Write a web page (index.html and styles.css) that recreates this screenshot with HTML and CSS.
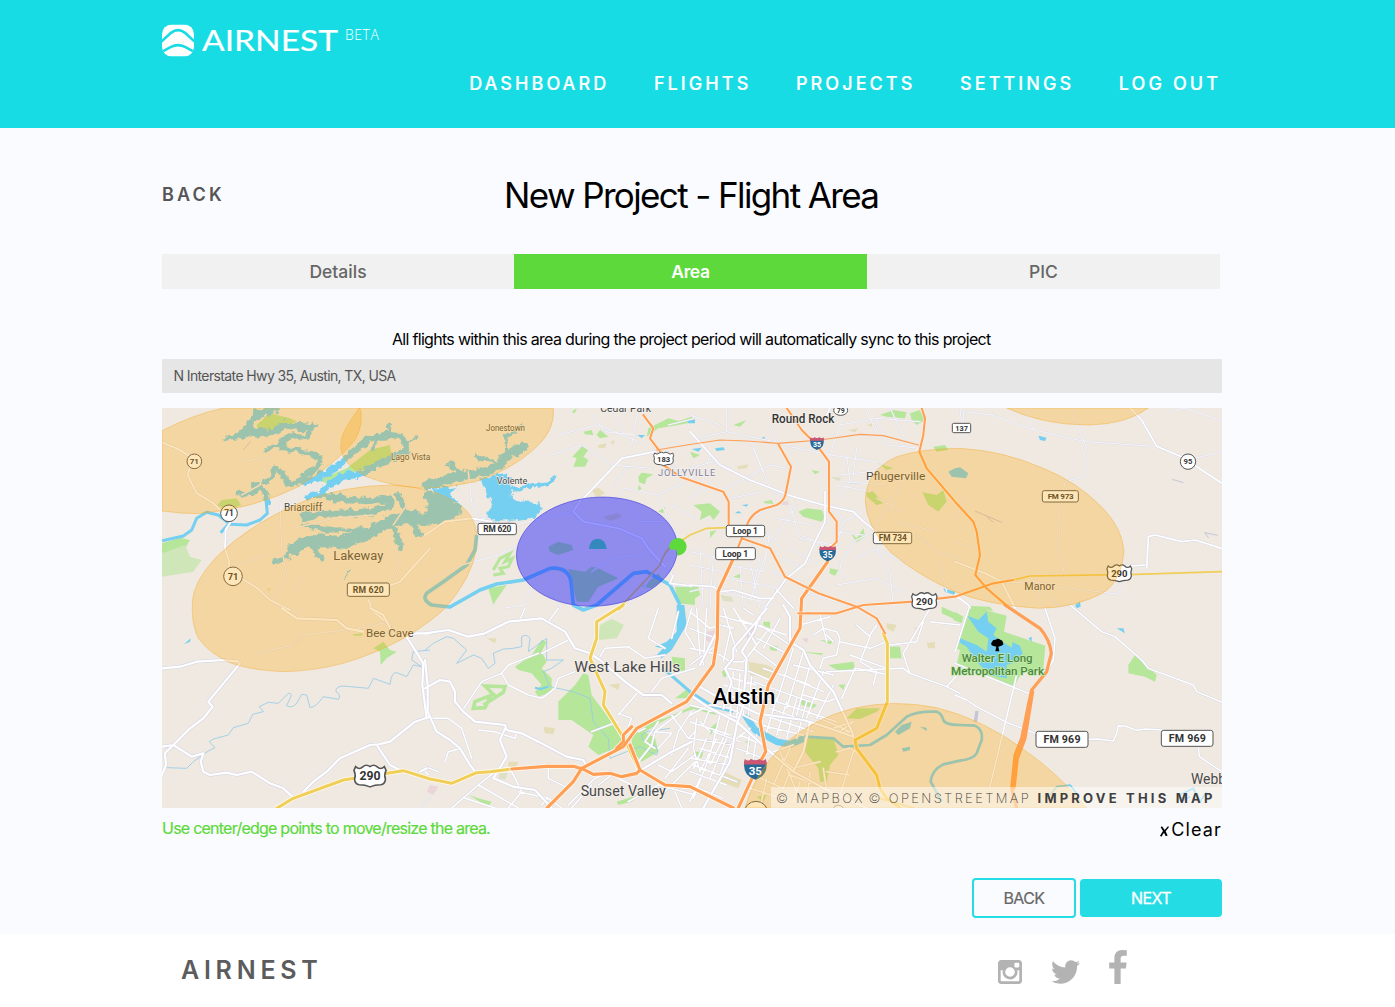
FILE: index.html
```html
<!DOCTYPE html>
<html lang="en">
<head>
<meta charset="utf-8">
<title>Airnest - New Project</title>
<link rel="stylesheet" href="styles.css">
</head>
<body>
<header class="header">
  <div class="wrap header-inner">
    <a class="brand">
      <svg class="brand-mark" viewBox="0 0 96 96"><defs><clipPath id="badge"><rect width="96" height="96" rx="29"/></clipPath></defs><g clip-path="url(#badge)"><rect width="96" height="96" fill="#fff"/><g fill="none" stroke="#18dce4" stroke-width="8"><path d="M-4 53L27 25Q48 9 69 25L100 53"/><path d="M-4 84L27 67Q48 57 69 67L100 84"/></g></g></svg>
      <svg class="brand-name" viewBox="0 0 140 36"><text x="0" y="27" textLength="136" lengthAdjust="spacingAndGlyphs">AIRNEST</text></svg>
      <span class="beta">BETA</span>
    </a>
    <nav class="nav"><a>DASHBOARD</a><a>FLIGHTS</a><a>PROJECTS</a><a>SETTINGS</a><a>LOG OUT</a></nav>
  </div>
</header>

<main class="wrap main">
  <div class="title-row"><a class="back-link">BACK</a><h1>New Project - Flight Area</h1></div>
  <div class="tabs"><span>Details</span><span class="active">Area</span><span>PIC</span></div>
  <p class="note">All flights within this area during the project period will automatically sync to this project</p>
  <div class="search">N Interstate Hwy 35, Austin, TX, USA</div>

  <div class="map">
  <svg class="map-art" viewBox="6 9 3180 1200">
    <defs>
      <filter id="shore" x="-5%" y="-5%" width="110%" height="110%" color-interpolation-filters="sRGB"><feTurbulence type="fractalNoise" baseFrequency=".045" numOctaves="3" seed="4"/><feDisplacementMap in="SourceGraphic" scale="26" xChannelSelector="R" yChannelSelector="G"/></filter>
      <g id="streets">
        <path d="M6 110L95 150M245 270L300 240L320 170M360 290L365 430L380 510L340 600M230 480L320 450M400 370L520 340L640 330M440 270L480 230M430 520L400 570M250 170L330 155M480 150L520 90M690 400L720 470L700 520M700 360L740 300"/>
        <g transform="translate(795 0)"><path d="M400 90L520 60L640 110M380 150L470 120L560 180L680 190M500 30L540 80L630 90M560 9L600 90M640 9L620 120M690 130L770 210L810 220M560 250L610 180M560 300L600 250L700 270L780 230M610 280L640 350L720 350M730 60L810 40M240 370L350 340L440 320L470 350L560 360L640 400L680 450L730 500M0 390L60 350L180 340M0 530L110 480L220 450L320 400M500 500L560 460L660 450M740 500V540L800 545M680 510L650 560L600 609M330 520L300 600L240 609M380 500L370 560L410 609M700 280L760 400M740 300L810 340M130 200L140 290L180 350"/></g>
        <g transform="translate(1590 0)"><path d="M0 30L90 60M20 100L110 80L300 120M110 80V10M180 100L220 200M240 60L260 115M300 125L420 150L560 170M420 150L450 60L560 40L690 50M450 60V9M560 40L590 120L690 130M530 9L560 90M450 210L540 200L590 170M470 150L480 230L440 280M500 130L490 210M600 9L650 110M0 190L70 170L120 190M110 250L240 180L290 190M190 130L240 250L280 280M60 150L30 260L0 280M120 280L220 260M180 340L260 300M200 360L250 410L320 300M300 300L330 400L430 420M240 380L220 500L110 480M260 340L370 360M430 300L460 350L540 310M460 350L440 420M500 460L560 430L640 470M460 520L450 480L490 410L550 380M560 430L600 500L610 609M430 380L520 390M440 240L540 260L590 200M440 540L560 520L640 560M100 560L250 600M110 520L270 550M150 480L160 609M180 470L210 609M210 460L190 550M230 440L180 590M250 500L330 530M280 460L340 490M300 430L370 470M330 390L400 420M340 560L440 590M0 440L90 460M0 480L100 500M0 560L80 540M30 430L40 609M70 450L60 609M610 260L550 380M650 200L600 320M560 280L640 320M620 350L740 380M680 390L740 440L770 560M740 440L810 460M460 230L590 240"/></g>
        <g transform="translate(2385 0)"><path d="M15 9L20 60L0 75M30 100L25 20L110 30L240 75L390 110L600 124M210 9L235 75M355 9L365 60L395 130L385 150L397 175L385 215L330 230L310 350L315 385L305 425L328 475L320 530M720 160L810 138M650 20L690 9L810 50M0 410L70 430M35 280L0 340M240 540L265 609M240 515L260 560L320 609M130 535L240 530L300 545L495 568V500"/></g>
        <g transform="translate(0 600)"><path d="M290 145L400 120L430 90L600 70L690 50M420 9L405 35M790 145L810 140M780 609L810 580"/></g>
      </g>
      <g id="city-streets">
        <g transform="translate(795 600)"><path d="M285 45L300 9M370 50L400 10M110 320L170 230L230 205L250 180L340 145M230 205L250 240L310 270L350 280L390 250L400 220L450 200M430 105L350 145M700 10L670 100L720 130M525 155L540 130L610 125L660 160L720 150M760 20L740 100M680 260L710 220L810 190M580 330L640 260M580 325L620 340L600 390M500 380L580 350M10 340L70 340L110 370L140 460M60 470L70 440L110 430M160 375L210 380L270 400L275 385M0 485L40 500M0 500L10 509M80 609L160 540L210 500L260 500L290 560L250 609M160 540L280 609M120 580L210 609M280 560L370 580L410 609M370 480L370 520L430 550M350 600L370 580M430 600L510 520L560 500M520 540L560 510L620 540M440 609L500 540M610 590L700 540L810 570M640 470L680 420L690 380L770 320M690 380L740 385L700 430M740 330L790 400L810 380M700 480L740 500L810 450M720 520L790 430M740 540L810 470M750 560L770 609M660 370L640 380M700 350L660 410L690 430M800 320L760 380L740 450M700 580L730 550M800 10L780 80L810 130"/></g>
        <g transform="translate(1590 600)"><path d="M0 20L60 70L90 60M0 70L80 100M80 120L0 180M20 10L30 150M50 9L40 180M0 130L90 150M90 60L130 70M100 9L140 140M130 9L200 120M80 30L190 60M160 9L190 30M150 45L290 90M210 60L300 120M90 150L120 170L160 170L200 120M230 80L170 160M270 40L220 130M120 80L100 170M190 130L270 190M200 100L280 140M110 190L180 200L250 230M190 230L360 290M220 190L360 240M310 130L260 290M340 140L290 310M310 180L430 210M280 210L400 260M360 180L320 330M400 200L350 340M430 240L380 340M240 310L380 360M220 330L370 380M210 360L340 390M260 280L230 380M290 290L260 390M320 280L290 400M350 290L320 400M200 270L440 350M340 270L410 290L440 280M370 90L400 70L440 80L450 100L440 150L400 160L390 190M390 30L410 110M330 60L420 35M450 110L540 130L590 110M480 150L590 190M500 60L540 95L510 170L560 200L550 240M410 200L640 190L660 205M430 110L410 90M495 190L455 280M495 190L600 210M540 90L560 60M0 300L150 340M0 350L120 390M0 330L60 300L120 310L240 370M20 340L10 430L30 500M0 400L130 420M60 310L40 360M0 460L120 480M90 330L60 450L10 580M120 330L100 400L60 480M0 500L110 540M30 350L60 380M70 380L150 410M30 430L120 460M10 480L140 530M0 540L100 580M50 400L10 490M80 400L30 500M110 400L60 520M130 400L90 510M30 520L0 590M140 400L180 370M140 430L220 460L190 500M150 390L220 420M180 380L170 450M200 390L190 460M220 450L310 420M240 440L310 490L390 470M190 510L280 550L300 500M180 550L260 575M230 520L210 609M270 440L320 560M300 430L250 540M300 510L460 570M330 530L310 590M360 500L350 590M400 490L410 560M380 360L490 385M390 340L480 380M430 370L490 350L450 380M440 440L480 430L530 460M490 440L450 570M410 500L480 510M720 10L640 145L650 180L660 205L770 245L810 200M600 120L680 110L700 50M770 245L810 265M720 50L810 60M130 200L120 340M150 205L140 340M170 210L160 330M185 215L175 330M100 240L190 265M110 215L200 240M90 265L190 290"/></g>
        <g transform="translate(2385 600)"><path d="M270 10L300 100L295 165L280 190M0 175L220 265M185 210L105 545M0 270L35 285L65 305L150 350L240 385M45 0L0 140M400 403L430 402L475 408L485 385L490 362L510 363L545 376L570 372L620 374M730 425L733 455L801 500"/><path d="M345 0L440 80L480 95L560 165L580 190L715 240L725 260L801 292"/></g>
      </g>
      <g id="avenues">
        <path d="M6 112L60 135L98 160L83 210L110 265L160 295L195 330M212 350L197 375L195 430L208 470L205 490M245 520L290 548L330 585L390 615M810 430L720 530L640 560L620 575M625 585L640 620L690 660L690 690"/>
        <g transform="translate(795 0)"><path d="M475 280L590 160L690 140M470 280L445 320L475 350L580 370L650 400L670 430L720 485M745 510L735 535L800 543M0 390L60 350L140 340L200 350"/></g>
        <g transform="translate(1590 0)"><path d="M0 80L90 180L180 225L310 275L400 300L490 320L520 350L560 380M405 260V350L380 400L345 475L290 520L260 560L220 615M0 540L70 545L95 560L130 555L210 580L250 580M260 555L310 609M420 9L405 40"/></g>
        <g transform="translate(2385 0)"><path d="M525 9L560 45L605 124L690 160L740 195L801 235M575 490L580 395L600 390L680 410L720 405L801 430M495 485L570 480M0 570L40 600L45 609M0 470L90 505L140 530L180 609"/></g>
      </g>
      <g id="city-avenues">
        <g transform="translate(0 600)"><path d="M6 190L60 185L110 170L190 165L235 170M240 175L145 290L158 305L130 340L90 370L40 420L15 445L18 480L6 510M6 425L40 420L95 455L130 445L122 470L130 500L150 510L200 503L230 510L275 500L330 535L370 550L400 578M365 9L410 40L530 45L560 70L610 80M630 9L670 30L690 70M710 85L740 95L790 175L787 240L800 340M740 95L770 85L810 85M430 560L460 530L500 500L540 460L630 420L655 418L690 410L765 350L810 335M650 420L690 480L720 495M780 500L800 490"/></g>
        <g transform="translate(795 600)"><path d="M0 85L70 75L130 95L180 85L250 50L350 40L420 80L450 130L495 145L525 165L600 230L655 270L710 270L740 295M0 165L8 240V320L35 380L75 405L105 430L135 480L150 500M0 250L45 225L75 230L90 260L90 290L115 320L150 350L240 360L245 375L290 385L340 410L425 455L475 465L480 475M240 370L225 405L245 455L205 520L265 545L330 555L380 609M640 500L740 440L800 410M600 400L620 430"/></g>
        <g transform="translate(1590 600)"><path d="M20 240L90 280L150 300L200 325L340 345L390 360L490 395M230 10L205 40L195 75L155 140L170 160L160 300L140 360L120 470L40 609M280 0L300 35L300 110L340 135L360 180L430 260L490 390M210 40L190 60L130 130L130 160L105 190L125 230L100 310M0 270L60 310L140 350L240 440L310 500L420 560L530 609M90 60L30 180M360 350L340 440L310 500"/></g>
      </g>
      <g id="arterials">
        <path d="M350 1210L400 1180L550 1125L730 1097L810 1122L875 1135L950 1103L990 1100L1055 1092"/>
        <path d="M1375 612L1390 600L1310 650L1310 700L1290 760L1335 860L1330 900L1395 1005L1440 1100"/>
        <path d="M2170 685L2182 715V890L2150 970L2085 1005L2090 1030L2150 1110L2160 1150L2180 1180L2220 1209"/>
      </g>
      <g id="thin-arterials">
        <path d="M1375 612L1500 480Q1515 430 1545 420L1590 390L1640 370L1700 368M2560 525L2610 513L2930 508L3186 500M2160 1180L2260 1209"/>
      </g>
      <g id="highways">
        <path d="M1160 1210L1240 1130L1265 1090L1390 1025L1430 970L1580 890L1660 780L1672 700L1674 560L1718 465"/>
        <path d="M1260 1090L1240 1084H1160L1055 1092M1265 1090L1300 1108L1350 1105L1385 1115L1430 1105L1440 1095L1515 1140L1590 1145L1720 1209M1370 1030L1390 1010V990L1415 965M1410 1020L1440 1095"/>
        <path d="M1735 1209L1790 1090L1817 1040L1800 950L1825 840L1920 670L1925 580L1975 510L2003 470"/>
      </g>
      <g id="north-highways">
        <path d="M1725 450L1745 400L1765 350Q1775 330 1800 315L1850 300Q1870 290 1876 270L1893 185L1855 118M2015 425L2030 410V350L2007 320V170L1970 120L1925 75L1880 9M1450 30L1480 70L1470 100L1500 140L1510 180L1560 215L1690 260L1706 290V370M1745 400L1830 430L1875 515L1975 565L2090 605L2150 640L2175 685M2285 9L2295 40L2290 90L2278 140L2300 190L2385 290L2440 350L2450 380L2460 450L2446 510L2480 550L2550 610M1915 625H2030L2110 600L2260 590L2385 575L2500 535L2560 525"/>
      </g>
    </defs>

    <rect x="6" y="9" width="3180" height="1200" fill="#efe9e1"/>

    <g fill="#b5e69a">
      <path d="M6 415L60 398L90 405L75 430L6 450Z"/><path d="M6 445L75 420L90 455L125 465L100 500L6 515Z" fill="#cfe6b8"/>
      <path d="M290 60L330 25L390 40L412 50L340 75L295 85ZM172 300L185 285L230 280L243 300L200 318ZM475 225L560 190L630 135L690 120L695 160L640 190L560 205L500 235ZM795 330L820 310L835 320L800 335ZM640 730L670 710L690 735L710 740L680 760L662 780L660 740ZM580 688L610 685L605 692L580 692ZM700 405L715 390L720 405L705 420Z"/>
      <g transform="translate(795 0)"><path d="M430 492L480 500L500 485L520 490L580 520L520 545L490 590L455 590L440 530ZM370 425L400 410L440 420L445 435L400 450L375 440Z"/><path d="M442 155L475 120L490 135L475 155L490 165L480 185L445 185L455 160ZM640 215L650 203L685 208L665 220L660 238L642 232ZM670 70L730 40L760 48L800 35L810 50L760 60L700 70L665 95ZM515 90L525 75L550 95L525 100ZM475 80L500 75L505 90L480 88ZM440 20L455 9L450 25ZM190 550L245 540L210 590L205 600ZM700 320L720 305L715 325ZM750 545H810V600L760 595ZM640 240L650 250L640 260ZM650 545L700 505L715 525L680 550Z"/><path d="M205 495L225 460L255 445L240 470L262 460L250 485L225 490L235 505L205 510" fill="none" stroke="#b5e69a" stroke-width="9"/></g>
      <g transform="translate(1590 0)"><path d="M10 300L60 295L90 320L70 345L60 330L30 345L35 320ZM325 320L350 310L395 315L405 335L395 350L340 335ZM220 290L245 285L250 297L225 295ZM570 30L610 15L650 22L645 40L590 35ZM660 25L690 15L705 45L680 60L665 45ZM130 60L170 45L150 65ZM565 175L610 190L590 195ZM730 125L765 120L775 135L740 140ZM480 380L500 400L520 370L525 395L500 412ZM420 490L445 495L435 512L418 505ZM0 550L25 545L30 570L0 590ZM130 515L155 505L150 520ZM365 195L390 200L375 208ZM530 255L550 260L580 295L560 300L530 275ZM697 262L740 270L760 255L770 290L745 320L715 300ZM0 140L30 150L10 160ZM60 380L80 375L60 400Z"/></g>
      <path d="M2430 603L2540 632L2532 680L2656 722L2650 790L2590 795L2562 845L2490 820L2390 780L2400 735L2385 730ZM2905 780L2925 750L2960 780L2990 810L2985 830L2955 815L2905 805ZM2385 620L2410 635L2405 655L2380 645ZM2430 603L2490 605L2500 618L2430 610Z"/>
      <g transform="translate(795 600)"><path d="M270 185L320 150L350 105L365 110L350 140L365 170L350 190L380 220L380 260L340 275L330 260L350 240L320 205L280 195ZM400 290L450 240L475 205L490 210L500 270L560 350L600 400L570 430L520 450L490 425L505 390L440 345L400 345ZM620 400L640 360L720 340L810 300V310L730 340L660 380L690 400L700 440L650 470L620 435ZM740 155L780 160L780 200L745 190ZM750 280L790 250L810 280ZM575 590L640 570L620 590L580 600ZM130 570L160 580L200 590L190 605Z"/><path d="M175 300L235 262L240 245L180 243L205 268L150 290L145 310L180 308L195 275" fill="none" stroke="#b5e69a" stroke-width="11"/><path d="M525 60L560 42L597 60L575 100L520 105Z" fill="#cfe6b8"/></g>
      <g transform="translate(1590 600)"><path d="M600 125L630 125L635 160L600 160ZM415 180L490 170L495 190L450 200ZM390 105L435 108L420 118ZM220 50L240 50L240 70L220 60ZM240 118L265 125L260 138L240 135ZM755 5L810 30V50L755 25ZM350 400L430 398L445 450L420 480L410 530H390L385 490L345 440ZM470 340L500 310L570 310L560 320L510 342ZM445 240L465 238L460 255ZM60 370L90 345L80 370L60 390ZM10 440L40 440L35 458L12 455ZM330 140L400 145L395 150ZM165 410L180 405L180 420ZM200 575L230 570L220 590ZM0 300L60 310L80 330L0 310ZM330 280L380 300L370 310L335 300ZM95 200L110 190L120 220L100 215Z"/></g>
    </g>
    <g fill="#e5ddb7">
      <path d="M1295 255L1315 248L1335 265L1310 278ZM1330 335L1375 325L1385 335L1350 348ZM1315 120L1340 115L1335 130L1315 128ZM1350 110L1365 105L1360 120ZM320 550L335 550L325 560ZM1730 185L1765 178L1760 190L1735 192ZM2065 75L2095 70L2085 82ZM2120 60L2140 55L2135 65ZM980 700L1010 700L1005 715ZM1345 840L1380 835L1375 855ZM1150 965L1185 970L1180 988L1155 985ZM1765 770L1820 780L1840 790L1830 820L1770 810ZM1690 1100L1745 1125L1735 1150L1680 1130ZM1045 1070L1075 1070L1070 1085L1045 1085ZM2180 655L2210 660L2200 680L2180 670ZM2300 715L2325 710L2325 730L2305 730ZM2260 668L2285 668L2275 678Z"/>
      <path d="M1020 1105L1045 1100L1035 1125L1015 1120ZM1680 570L1715 575L1720 590L1690 588ZM2010 215L2045 218L2035 228Z" fill="#dce0c4"/>
    </g>
    <path fill="#e9d5da" d="M1640 680L1665 675L1660 715L1635 705ZM1765 670L1785 665L1785 690L1760 700ZM1925 700L1945 700L1940 715ZM810 1140L835 1145L820 1170L800 1160ZM1865 290L1885 288L1885 300L1865 300Z"/>

    <g filter="url(#shore)" fill="none" stroke="#75cff0" stroke-linejoin="round" stroke-linecap="round">
      <path d="M350 12L290 25L278 50L258 78L300 85L340 80L375 58L410 65L455 68" stroke-width="24"/>
      <path d="M258 78L240 95L200 100M455 68L440 98L385 92L368 110M375 115L320 130" stroke-width="14"/>
      <path d="M365 110L362 125L400 135L460 145L483 165L475 190L432 210L420 232L382 240L370 205L345 190L330 225L285 235L292 258L235 267M285 245L318 262L322 290" stroke-width="16"/>
      <path d="M420 232L470 220L530 185L580 140L620 105L680 90L720 95L740 125L735 145L690 160L650 180L600 208L545 215L500 245L488 268L445 275" stroke-width="20"/>
      <path d="M680 90L690 55M730 110L768 98M650 100L640 130M600 208L565 205" stroke-width="9"/>
      <path d="M505 275L550 282L620 290L690 280V302L640 320L560 325L500 325L430 335" stroke-width="21"/>
      <path d="M400 430L450 405L550 412L620 388L680 352L740 335L790 342L850 335L885 312" stroke-width="37"/>
      <path d="M800 270L850 285L875 310L860 335L800 345" fill="#75cff0" stroke-width="22"/>
      <path d="M345 473L385 450L410 425M430 360L500 375L620 375M715 270L738 325M700 370L725 430M755 355L785 392" stroke-width="15"/>
      <path d="M455 420L485 462" stroke-width="19"/>
      <path d="M555 520L572 497M385 468L405 410" stroke-width="5"/>
      <path d="M805 242L885 218L995 195L1040 155L1090 125" stroke-width="27"/>
      <path d="M1040 150L1035 95L1085 65M870 175L905 208M950 157L1000 165" stroke-width="12"/>
      <path d="M960 222L1030 208L1060 220L1052 270L1075 290L1135 292L1148 310L1125 337L1045 348H995L980 325L998 300L985 270ZM815 252L890 245L870 268L895 292L850 290Z" fill="#75cff0" stroke-width="2"/>
      <path d="M1055 255L1125 240L1165 235L1180 220" stroke-width="12"/>
    </g>
    <g fill="#75cff0">
      <path d="M1595 132L1625 128L1615 140ZM1725 325L1735 318L1745 325ZM1745 300L1765 298L1760 305ZM1805 98L1815 95L1812 105ZM1665 130L1690 127L1695 135L1670 138ZM1432 90L1455 90L1445 100ZM1580 45L1605 40V55L1585 55ZM2365 200L2385 190L2400 187L2425 205L2418 220L2375 215ZM2635 92L2660 98L2655 108L2640 105ZM2745 600L2760 590L2762 605L2750 610ZM2350 550L2385 560L2385 570L2355 560ZM72 718L92 700L90 710ZM2870 670L2890 670L2895 685ZM2605 700L2615 695L2615 710ZM970 685L980 685L978 692Z"/>
      <path d="M2422 632L2455 645L2480 620L2485 650L2510 670L2500 690L2530 712L2555 728L2558 712L2580 722L2588 745L2570 770L2540 780L2540 820L2490 810L2450 770L2420 725L2395 710L2400 700L2450 720L2480 740L2485 700L2455 680Z"/>
      <path d="M1550 600L1573 600L1580 660L1535 735L1505 760L1490 750L1510 730L1485 725L1520 710L1550 680Z"/>
      <path d="M2205 980L2225 960L2255 950L2250 970L2215 990ZM2225 1030L2250 1025L2250 1035L2230 1040ZM2280 965L2300 968L2300 978Z"/>
    </g>
    <g fill="none" stroke="#75cff0" stroke-linejoin="round">
      <path d="M318 285L322 325L300 345L260 360L210 358L175 330L140 322L110 340L95 375L70 393L6 407M205 358L182 383" stroke-width="9"/>
      <path d="M950 390L945 435L920 480L850 530L800 565Q785 585 815 600L870 606L960 555L1010 537L1090 525L1170 490Q1225 485 1233 530L1240 600L1270 615L1310 600L1420 505L1460 500L1530 540L1560 600" stroke-width="11"/>
      <path d="M1515 795L1590 860L1660 905L1720 920" stroke-width="9"/>
      <path d="M1930 995L2020 1000L2050 1025L2130 1020L2180 990L2240 935Q2270 918 2330 920Q2345 925 2350 945Q2355 960 2400 960L2445 962Q2470 975 2465 1005L2450 1045Q2440 1062 2400 1067L2350 1078Q2315 1095 2312 1130L2345 1190" stroke-width="8"/>
      <path d="M1755 930L1785 975L1850 1010L1890 1018L1932 1000" stroke-width="20"/>
      <path d="M2670 1170L2690 1145L2730 1140L2750 1165M3060 1170L3100 1150L3120 1190L3140 1160M3060 1190L3090 1175" stroke-width="5"/>
      <g stroke-width="2.5" stroke="#94cbe8"><path d="M20 1088L80 1090L100 1070L145 1038L165 1028L148 1010L160 1002L205 990L220 968L265 955L278 928L310 920L298 905L325 892L355 895L385 865Q400 865 390 880L380 902Q395 912 410 895L425 868L440 870L450 908Q470 905 490 875L535 883Q545 870 528 860Q525 845 550 843L625 850L640 820L690 838Q695 800 710 803L740 815L760 780L785 785L755 765L760 740L810 735"/><path d="M795 735L820 715L860 695L880 700L920 735L890 775L940 750L965 760L985 790L1005 775L1000 745L1030 732L1060 730L1085 725L1085 695Q1100 685 1110 700L1105 740L1160 700V765L1210 765L1175 790L1150 800L1170 845L1240 860L1290 880L1300 950L1345 1000L1350 1060L1400 1040L1440 1025L1490 1050Q1500 1030 1480 1020Q1440 1010 1445 990L1460 980L1530 970"/></g>
      <path d="M1125 848L1142 852L1165 845" stroke-width="6"/>
    </g>

    <use href="#streets" class="street-edge"/><use href="#streets" class="street"/>
    <use href="#city-streets" class="city-street-edge"/><use href="#city-streets" class="city-street"/>
    <use href="#avenues" class="avenue-edge"/><use href="#avenues" class="avenue"/>
    <use href="#city-avenues" class="city-avenue-edge"/><use href="#city-avenues" class="city-avenue"/>
    <use href="#arterials" class="casing"/><use href="#arterials" class="arterial"/>
    <use href="#thin-arterials" class="arterial thin"/>
    <use href="#highways" class="casing"/><use href="#highways" class="highway"/>
    <use href="#north-highways" class="casing narrow"/><use href="#north-highways" class="highway narrow"/>
    <path class="highway slim" d="M1490 135L1580 120L1680 105L1760 108L1855 115L1980 105L2100 88L2170 92L2275 120"/>
    <path class="highway" d="M2535 600L2640 670Q2670 705 2674 745L2660 800L2615 855L2605 900L2585 1000L2565 1050L2555 1150L2570 1209M2618 860L2595 1000L2572 1060L2562 1150"/>
    <path class="runway" d="M250 135L273 108M2445 318L2527 353M2480 335L2500 352M3037 223L3070 233M3134 383L3173 391M3134 383L3146 399"/><path class="runway wide" d="M2451 918L2446 950"/>

    <g class="label">
      <text x="372" y="317" font-size="30" textLength="115" lengthAdjust="spacingAndGlyphs">Briarcliff</text>
      <text x="520" y="466" font-size="41" textLength="150" lengthAdjust="spacingAndGlyphs">Lakeway</text>
      <text x="693" y="165" font-size="27" textLength="118" lengthAdjust="spacingAndGlyphs">Lago Vista</text>
      <text x="978" y="78" font-size="26" textLength="117" lengthAdjust="spacingAndGlyphs">Jonestown</text>
      <text x="1010" y="237" font-size="29" textLength="92" lengthAdjust="spacingAndGlyphs">Volente</text>
      <text x="1321" y="21" font-size="31" textLength="152" lengthAdjust="spacingAndGlyphs">Cedar Park</text>
      <text x="1494" y="212" font-size="28" textLength="172" class="suburb">JOLLYVILLE</text>
      <text x="1835" y="53" font-size="36" textLength="188" lengthAdjust="spacingAndGlyphs" class="strong">Round Rock</text>
      <text x="2118" y="224" font-size="35" textLength="178" lengthAdjust="spacingAndGlyphs">Pflugerville</text>
      <text x="2593" y="555" font-size="33" textLength="92" lengthAdjust="spacingAndGlyphs">Manor</text>
      <text x="618" y="696" font-size="35" textLength="143" lengthAdjust="spacingAndGlyphs">Bee Cave</text>
      <text x="1243" y="802" font-size="46" textLength="318" lengthAdjust="spacingAndGlyphs">West Lake Hills</text>
      <text x="1262" y="1172" font-size="43" textLength="255" lengthAdjust="spacingAndGlyphs">Sunset Valley</text>
      <text x="1659" y="896" font-size="65" textLength="187" lengthAdjust="spacingAndGlyphs" class="city">Austin</text>
      <text x="2405" y="771" font-size="33" textLength="213" lengthAdjust="spacingAndGlyphs" class="park">Walter E Long</text>
      <text x="2373" y="810" font-size="33" textLength="279" lengthAdjust="spacingAndGlyphs" class="park">Metropolitan Park</text>
      <text x="3093" y="1136" font-size="43" textLength="105" lengthAdjust="spacingAndGlyphs">Webb</text>
    </g>
    <path d="M2506 739L2509 725L2498 722Q2490 718 2496 711Q2498 703 2507 704Q2514 698 2521 704Q2529 706 2529 713Q2532 720 2524 722L2515 725L2518 739Z"/>

    <g class="shield">
      <g font-size="24"><circle cx="103" cy="169" r="22"/><text x="103" y="178">71</text></g>
      <g font-size="25"><circle cx="207" cy="325" r="25"/><text x="207" y="334">71</text></g>
      <g font-size="28"><circle cx="219" cy="514" r="28"/><text x="219" y="524">71</text></g>
      <g font-size="23"><circle cx="3084" cy="170" r="23"/><text x="3084" y="178">95</text></g>
      <g font-size="21"><ellipse cx="2042" cy="16" rx="21" ry="15"/><text x="2042" y="23">79</text></g>
      <circle cx="1788" cy="1225" r="36"/><circle cx="2035" cy="1219" r="18"/>
      <rect x="562" y="534" width="126" height="40" rx="6"/><text x="625" y="563" font-size="26" textLength="93">RM 620</text>
      <rect x="954" y="355" width="115" height="34" rx="6"/><text x="1012" y="381" font-size="25" textLength="84">RM 620</text>
      <rect x="1699" y="361" width="115" height="34" rx="6"/><text x="1756" y="387" font-size="25" textLength="75">Loop 1</text>
      <rect x="1667" y="428" width="119" height="36" rx="6"/><text x="1726" y="455" font-size="26" textLength="77">Loop 1</text>
      <rect x="2140" y="382" width="115" height="34" rx="6"/><text x="2198" y="408" font-size="25" textLength="84">FM 734</text>
      <rect x="2647" y="257" width="108" height="34" rx="6"/><text x="2702" y="282" font-size="24" textLength="78">FM 973</text>
      <rect x="2628" y="979" width="156" height="48" rx="7"/><text x="2706" y="1014" font-size="32" textLength="111">FM 969</text>
      <rect x="3004" y="976" width="155" height="48" rx="7"/><text x="3082" y="1011" font-size="32" textLength="111">FM 969</text>
      <rect x="2377" y="55" width="55" height="28" rx="4"/><text x="2405" y="77" font-size="22">137</text>
      <g transform="translate(1511 161)"><path id="us" d="M-27-17Q-20-10-13-17Q-7-22 0-17Q7-22 13-17Q20-10 27-17L30-10Q26-2 29 7Q28 16 20 17Q9 17 0 21Q-9 17-20 17Q-28 16-29 7Q-26-2-30-10Z"/><text y="9" font-size="23">183</text></g>
      <g transform="translate(2293 588) scale(1.27)"><use href="#us"/><text y="9" font-size="23">290</text></g>
      <g transform="translate(2878 504) scale(1.24)"><use href="#us"/><text y="9" font-size="23">290</text></g>
      <g transform="translate(630 1112) scale(1.6)"><use href="#us"/><text y="9" font-size="23">290</text></g>
    </g>
    <g class="interstate">
      <g transform="translate(1971 116)"><g id="i35"><path d="M-19-18Q-13-11-8-18Q0-13 8-18Q13-11 19-18Q26 10 0 19Q-26 10-19-18Z" fill="#286b98"/><path d="M-19-19Q-13-13-8-19Q0-14 8-19Q13-13 19-19L21-9H-21Z" fill="#cc5574"/><text y="10" font-size="21">35</text></g></g>
      <use href="#i35" transform="translate(2003 446) scale(1.2)"/>
      <use href="#i35" transform="translate(1786 1093) scale(1.65)"/>
    </g>

    <g class="zones">
      <path d="M6 77Q95 30 190 9H600Q613 55 585 105Q530 175 415 245Q280 312 115 326Q60 326 6 318Z"/>
      <path d="M597 9L560 65Q539 100 543 135Q550 180 620 215Q695 245 795 250Q870 248 945 230Q1050 198 1125 130Q1187 75 1180 9Z"/>
      <path d="M690 240Q555 243 440 285Q280 348 170 455Q100 530 97 590Q93 655 115 700Q150 748 215 775Q270 795 365 800Q455 800 550 775Q650 745 740 695Q820 645 855 610Q935 520 950 430Q960 330 885 292Q820 245 690 240Z"/>
      <path d="M2400 130Q2290 130 2210 155Q2115 198 2116 290Q2120 365 2190 440Q2270 510 2385 560Q2480 600 2635 610Q2750 609 2835 560Q2885 522 2892 440Q2888 370 2825 306Q2750 230 2650 190Q2530 137 2400 130Z"/>
      <path d="M2540 9Q2650 60 2785 60Q2900 58 2965 9Z"/>
      <path d="M1755 1209Q1785 1100 1870 1020Q1960 940 2080 910Q2200 882 2330 908Q2470 942 2600 1040Q2700 1110 2780 1209Z"/>
    </g>
    <path d="M1287 432Q1290 401 1313 401Q1337 402 1340 432Z" fill="#55e493"/>
    <ellipse cx="1311" cy="440" rx="242" ry="163" transform="rotate(-5 1311 440)" class="flight-area"/>
    <path d="M1529 433A26 26 0 1 1 1551 451L1551 435Z" fill="#5dd93b"/>
  </svg>
  <div class="credits"><span>© MAPBOX</span><span>© OPENSTREETMAP</span><b>IMPROVE THIS MAP</b></div>
  </div>

  <div class="under-map"><span class="hint">Use center/edge points to move/resize the area.</span><a class="clear"><svg viewBox="0 0 27 36"><path d="M6 4L14 15L24 4L27 6L17 19L23 32L17 33L12 23L4 35L0 32L9 18L2 7Z"/></svg>Clear</a></div>
  <div class="actions"><button class="btn-back">BACK</button><button class="btn-next">NEXT</button></div>
</main>

<footer class="footer"><div class="wrap footer-inner">
  <span class="footer-name">AIRNEST</span>
  <div class="social">
    <svg class="ig" viewBox="0 128 1536 1536"><path d="M1362 1426v-648h-135q20 63 20 131 0 126-64 232.5t-174 168.5-240 62q-197 0-337-135.5t-140-327.5q0-68 20-131h-141v648q0 26 17.5 43.5t43.5 17.5h1069q25 0 43-17.5t18-43.5zm-284-533q0-124-90.5-211.5t-218.5-87.5q-127 0-217.5 87.5t-90.5 211.5 90.5 211.5 217.5 87.5q128 0 218.5-87.5t90.5-211.5zm284-360v-165q0-28-20-48.5t-49-20.5h-174q-29 0-49 20.5t-20 48.5v165q0 29 20 49t49 20h174q29 0 49-20t20-49zm174-208v1142q0 81-58 139t-139 58h-1142q-81 0-139-58t-58-139v-1142q0-81 58-139t139-58h1142q81 0 139 58t58 139z"/></svg>
    <svg class="tw" viewBox="44 256 1576 1280"><path d="M1620 408q-67 98-162 167 1 14 1 42 0 130-38 259.5t-115.5 248.5-184.5 210.5-258 146-323 54.5q-271 0-496-145 35 4 78 4 225 0 401-138-105-2-188-64.5t-114-159.5q33 5 61 5 43 0 85-11-112-23-185.5-111.5t-73.5-205.5v-4q68 38 146 41-66-44-105-115t-39-154q0-88 44-163 121 149 294.5 238.5t371.5 99.5q-8-38-8-74 0-134 94.5-228.5t228.5-94.5q140 0 236 102 109-21 205-78-37 115-142 178 93-10 186-50z"/></svg>
    <svg class="fb" viewBox="479 0 864 1664"><path d="M1343 12v264h-157q-86 0-116 36t-30 108v189h293l-39 296h-254v759h-306v-759h-255v-296h255v-218q0-186 104-288.5t277-102.5q147 0 228 12z"/></svg>
  </div>
</div></footer>
</body>
</html>
```
FILE: styles.css
```css
* { box-sizing: border-box; }
html, body { margin: 0; height: 1007px; overflow: hidden; }
body { font-family: Inter, "Liberation Sans", sans-serif; background: #fafbff; color: #000; }
.wrap { width: 1060px; margin-left: 162px; }

.header { height: 128px; background: #18dce4; color: #fff; }
.header-inner { display: flex; flex-direction: column; padding-top: 24px; }
.brand { display: flex; align-items: flex-start; height: 48px; }
.brand-mark { width: 32px; height: 33px; margin-right: 8px; }
.brand-name { width: 140px; height: 36px; overflow: visible; font: 400 29px Lato, sans-serif; fill: #fff; stroke: #fff; stroke-width: .2; }
.beta { font: 300 14px/20px "Open Sans", sans-serif; letter-spacing: .55px; margin: 1px 0 0 3px; }
.nav { display: flex; justify-content: flex-end; gap: 44.6px; padding-right: 1px; font-size: 18px; line-height: 24px; font-weight: 500; letter-spacing: 3.08px; -webkit-text-stroke: .2px #fff; }

.main { height: 806px; display: flex; flex-direction: column; }
.title-row { display: grid; grid-template-columns: 342px 1fr; align-items: center; height: 126px; padding-top: 8px; }
.back-link { font-size: 18px; font-weight: 600; letter-spacing: 3.15px; color: #555; position: relative; top: -1px; }
h1 { margin: 0; font-size: 35px; font-weight: 400; letter-spacing: -1.62px; white-space: nowrap; }
.tabs { display: grid; grid-template-columns: 352px 353px 353px; height: 35px; line-height: 35px; font-size: 17.5px; font-weight: 500; text-align: center; color: #666; }
.tabs span { background: #f1f1f1; }
.tabs .active { background: #5dd93b; color: #fff; font-weight: 600; letter-spacing: -.4px; }
.note { margin: 40px 0 0; height: 30px; line-height: 20px; padding-right: 1.5px; font-size: 16px; letter-spacing: -.685px; text-align: center; }
.search { height: 34px; line-height: 34px; padding-left: 11.5px; background: #e6e6e6; color: #555; font-size: 14px; letter-spacing: -.62px; }

.map { display: grid; height: 400px; margin-top: 15px; overflow: hidden; }
.map-art { grid-area: 1 / 1; width: 1060px; height: 400px; }
.credits { grid-area: 1 / 1; place-self: end; display: flex; width: 451px; height: 21px; padding-left: 5px; background: rgba(255,255,255,.5); color: #404040; font-size: 13px; line-height: 22px; letter-spacing: 2.37px; font-weight: 200; white-space: nowrap; }
.credits span + span { margin-left: 3.5px; }
.credits b { margin-left: 6.5px; font-weight: 700; letter-spacing: 3.2px; }

.street-edge, .street, .city-street-edge, .city-street, .avenue-edge, .avenue, .city-avenue-edge, .city-avenue, .casing, .arterial, .highway { fill: none; stroke-linejoin: round; stroke-linecap: round; }
.street-edge { stroke: #dcdce8; stroke-width: 5; }
.street { stroke: #f6f5f9; stroke-width: 3; }
.city-street-edge { stroke: #d6d6e4; stroke-width: 7; }
.city-street { stroke: #fff; stroke-width: 4.5; }
.avenue-edge { stroke: #d9d9ea; stroke-width: 8; }
.avenue { stroke: #fff; stroke-width: 5; }
.city-avenue-edge { stroke: #d6d6e8; stroke-width: 10; }
.city-avenue { stroke: #fff; stroke-width: 6.5; }
.casing { stroke: #fffaf0; stroke-width: 14; }
.casing.narrow { stroke-width: 9; }
.arterial { stroke: #f1ce57; stroke-width: 9; }
.arterial.thin { stroke-width: 5; }
.highway { stroke: #ff9f55; stroke-width: 9.5; }
.highway.narrow { stroke-width: 6.5; }
.highway.slim { stroke-width: 3.5; }
.runway { stroke: #c5c5d8; stroke-width: 3; fill: none; }
.runway.wide { stroke-width: 10; }
.label text { font-family: Roboto, sans-serif; fill: #484848; stroke: #f5f1ec; stroke-width: 4; paint-order: stroke; }
.label .strong { fill: #333; font-weight: 500; }
.label .city { fill: #000; stroke: #fff; font-weight: 500; }
.label .suburb { fill: #8081a3; }
.label .park { fill: #4c8a3d; stroke: #c5eaaf; font-weight: 500; }
.shield circle, .shield ellipse, .shield rect, .shield path, .shield use { fill: #fff; stroke: #555; stroke-width: 3; }
.shield text { font-family: Roboto, sans-serif; font-weight: 700; fill: #333; stroke: none; text-anchor: middle; }
.interstate text { font-family: Roboto, sans-serif; font-weight: 700; fill: #fff; text-anchor: middle; }
.zones { fill: #ffa500; fill-opacity: .28; stroke: #f5a623; stroke-opacity: .45; stroke-width: 2.5; }
.flight-area { fill: #00f; fill-opacity: .4; stroke: #4b45df; stroke-width: 2; }

.under-map { display: flex; justify-content: space-between; height: 70px; padding-top: 9px; }
.hint { color: #5dd93b; font-size: 16px; line-height: 22px; letter-spacing: -.76px; -webkit-text-stroke: .2px #5dd93b; }
.clear { display: flex; font-size: 18px; line-height: 25px; letter-spacing: 1.15px; }
.clear svg { width: 11px; height: 12px; margin: 8px 1px 0 0; }
.actions { display: flex; justify-content: flex-end; align-items: center; gap: 4px; height: 40px; }
.actions button { font: 16px Inter, sans-serif; padding: 0; border-radius: 4px; }
.btn-back { width: 104px; height: 40px; border: 2px solid #24dce4; background: transparent; color: #666; letter-spacing: -.6px; -webkit-text-stroke: .2px #666; }
.btn-next { width: 142px; height: 38px; border: 0; background: #24dce4; color: #fff; letter-spacing: -.6px; -webkit-text-stroke: .3px #fff; }

.footer { height: 73px; background: #fff; }
.footer-inner { display: flex; justify-content: space-between; padding: 16px 95px 0 19px; }
.footer-name { font-size: 25px; line-height: 40px; font-weight: 600; color: #5c5c5c; letter-spacing: 4.75px; }
.social { display: flex; align-items: flex-end; height: 34px; fill: #b3b3b3; }
.ig { width: 24px; height: 24px; margin-right: 29px; }
.tw { width: 29px; height: 24px; margin-right: 29px; }
.fb { width: 18px; height: 34px; }
```
